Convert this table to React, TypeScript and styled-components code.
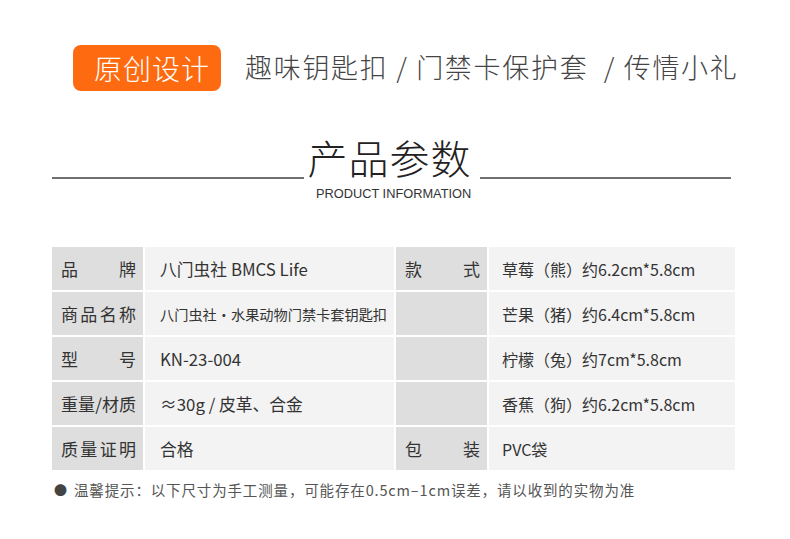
import React from 'react'
import styled, { createGlobalStyle } from 'styled-components'

const GlobalStyle = createGlobalStyle`
  body {
    margin: 0;
    background: #ffffff;
    font-family: "Noto Sans CJK SC", "Noto Sans", sans-serif;
  }
`

const leftRows = [
  { label: '品牌', value: '八门虫社 BMCS Life' },
  { label: '商品名称', value: '八门虫社·水果动物门禁卡套钥匙扣', small: true },
  { label: '型号', value: 'KN-23-004' },
  { label: '重量/材质', value: '≈30g / 皮革、合金' },
  { label: '质量证明', value: '合格' },
]

const rightRows = [
  { label: '款式', value: '草莓（熊）约6.2cm*5.8cm' },
  { label: '', value: '芒果（猪）约6.4cm*5.8cm' },
  { label: '', value: '柠檬（兔）约7cm*5.8cm' },
  { label: '', value: '香蕉（狗）约6.2cm*5.8cm' },
  { label: '包装', value: 'PVC袋' },
]

const App: React.FC = () => {
  return (
    <Page>
      <GlobalStyle />
      <Header>
        <Badge>原创设计</Badge>
        <Tagline>趣味钥匙扣 / 门禁卡保护套&nbsp; / 传情小礼</Tagline>
      </Header>

      <TitleRow>
        <Rule />
        <Title>产品参数</Title>
        <Rule />
      </TitleRow>
      <Subtitle>PRODUCT INFORMATION</Subtitle>

      <Table>
        {leftRows.map((row, i) => (
          <React.Fragment key={i}>
            <Label><LabelText>{row.label}</LabelText></Label>
            <Value $small={row.small}>{row.value}</Value>
            <Label><LabelText>{rightRows[i].label}</LabelText></Label>
            <Value $right>{rightRows[i].value}</Value>
          </React.Fragment>
        ))}
      </Table>

      <Note>
        <Dot>●</Dot>
        温馨提示：以下尺寸为手工测量，可能存在0.5cm–1cm误差，请以收到的实物为准
      </Note>
    </Page>
  )
}

const Page = styled.div`
  width: 790px;
  height: 539px;
  overflow: hidden;
  box-sizing: border-box;
  padding-top: 45px;
`

const Header = styled.div`
  display: flex;
  align-items: center;
  gap: 24px;
  padding-left: 73px;
`

const Badge = styled.div`
  width: 148px;
  height: 46px;
  box-sizing: border-box;
  padding-left: 21px;
  display: flex;
  align-items: center;
  background: #fd6a0f;
  border-radius: 8px;
  color: #ffffff;
  font-size: 28px;
  font-weight: 300;
  letter-spacing: 1px;
`

const Tagline = styled.div`
  margin-top: -3px;
  color: #444444;
  font-size: 27px;
  font-weight: 300;
  white-space: pre;
  letter-spacing: 1.7px;
`

const TitleRow = styled.div`
  display: flex;
  align-items: flex-end;
  margin-top: 42px;
  padding: 0 59px 0 52px;
`

const Rule = styled.div`
  flex: 1;
  height: 2px;
  background: #707070;
  margin-bottom: 2px;
`

const Title = styled.div`
  padding: 0 8px 0 4px;
  color: #222222;
  font-size: 40px;
  font-weight: 300;
  line-height: 48px;
  letter-spacing: 1px;
`

const Subtitle = styled.div`
  margin-top: 5px;
  padding-left: 316px;
  color: #333333;
  font-family: "Liberation Sans", Arial, sans-serif;
  font-size: 12.8px;
  line-height: 16px;
`

const Table = styled.div`
  display: grid;
  grid-template-columns: 91px 249px 91px 246px;
  grid-auto-rows: 43px;
  gap: 2px;
  margin: 45px 0 0 52px;
`

const Label = styled.div`
  display: flex;
  align-items: center;
  padding: 0 7px 0 9px;
  background: #dedede;
`

const LabelText = styled.span`
  width: 100%;
  color: #333333;
  font-size: 17px;
  white-space: nowrap;
  text-align: justify;
  text-align-last: justify;
`

const Value = styled.div<{ $small?: boolean; $right?: boolean }>`
  display: flex;
  align-items: center;
  padding-left: ${p => (p.$right ? '13px' : '15px')};
  background: #f3f3f3;
  color: #333333;
  font-size: ${p => (p.$small ? '14.2px' : p.$right ? '16px' : '16.8px')};
  white-space: nowrap;
`

const Note = styled.div`
  display: flex;
  align-items: center;
  margin-top: 10px;
  padding-left: 54px;
  color: #555555;
  font-size: 14.5px;
  line-height: 20px;
  letter-spacing: 0.85px;
`

const Dot = styled.span`
  margin-right: 7px;
  color: #444444;
  font-size: 13px;
  letter-spacing: 0;
`

export default App
